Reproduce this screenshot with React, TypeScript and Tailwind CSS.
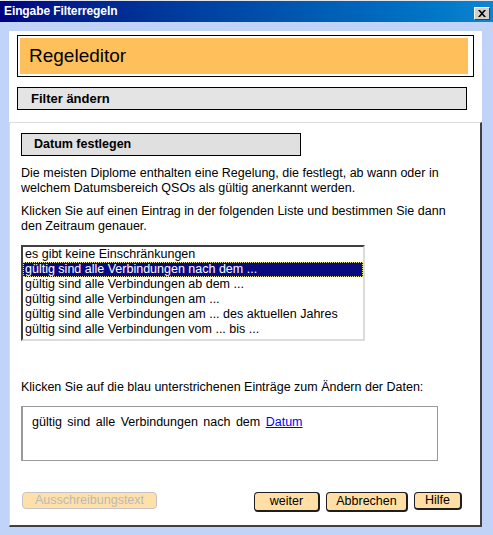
import React from "react";

const items = [
  "es gibt keine Einschränkungen",
  "gültig sind alle Verbindungen nach dem ...",
  "gültig sind alle Verbindungen ab dem ...",
  "gültig sind alle Verbindungen am ...",
  "gültig sind alle Verbindungen am ... des aktuellen Jahres",
  "gültig sind alle Verbindungen vom ... bis ...",
];

const font = { fontFamily: '"Liberation Sans", Arial, sans-serif' };

function Btn({ label, w, h, disabled }: { label: string; w: string; h: string; disabled?: boolean }) {
  if (disabled) {
    return (
      <div className={`${w} ${h} flex items-center justify-center rounded-[4px] border border-[#c4c4c4] bg-[#ffe0aa] text-[12.5px] text-[#b9b9b9]`}>
        {label}
      </div>
    );
  }
  return (
    <div className={`${w} ${h} flex items-center justify-center rounded-[4px] border border-r-2 border-b-2 border-[#1e1e1e] bg-[#ffdfa6] text-[12.5px] text-black`}>
      {label}
    </div>
  );
}

export default function App() {
  return (
    <div className="w-[493px] h-[535px] bg-[#c1d3f6] flex flex-col text-black" style={font}>
      {/* title bar */}
      <div className="h-[22px] border-t border-[#dfe4ee] bg-gradient-to-r from-[#000080] to-[#1084d0] flex items-start justify-between pl-[4px] pr-[3px]">
        <span className="text-white font-bold text-[12px] leading-[20px] tracking-[-0.1px]">Eingabe Filterregeln</span>
        <div className="mt-[6px] w-[16px] h-[13px] bg-[#d4d0c8] border border-t-white border-l-white border-r-[#404040] border-b-[#404040] flex items-center justify-center">
          <svg width="8" height="7" viewBox="0 0 8 7">
            <path d="M0 0h2l2 2.2L6 0h2L5 3.5 8 7H6L4 4.8 2 7H0l3-3.5z" fill="#000" />
          </svg>
        </div>
      </div>

      <div className="flex-1 flex flex-col pl-[9px] pr-[11px] pt-[9px] pb-[8px]">
        {/* top panel */}
        <div className="h-[91px] bg-white pt-[4px] pl-[8px]">
          <div className="w-[457px] h-[42px] border border-black pl-[2px] pt-[2px] pb-[2px] pr-[5px]">
            <div className="h-full bg-[#ffc05c] flex items-center pl-[9px] text-[19px]">Regeleditor</div>
          </div>
          <div className="mt-[10px] w-[450px] h-[23px] border border-black bg-[#e4e4e4] flex items-center pl-[13px] font-bold text-[13px]">
            Filter ändern
          </div>
        </div>

        {/* main panel */}
        <div className="flex-1 bg-white border-t border-l border-[#dcdcdc] border-r-2 border-b-2 border-r-[#404040] border-b-[#404040] pl-[11px] pt-[10px] pr-[18px] flex flex-col">
          <div className="w-[280px] h-[23px] border border-black bg-[#e0e0e0] flex items-center pl-[12px] font-bold text-[12.5px]">
            Datum festlegen
          </div>
          <p className="mt-[10px] text-[12.5px] leading-[15px]">
            Die meisten Diplome enthalten eine Regelung, die festlegt, ab wann oder in welchem Datumsbereich QSOs als gültig anerkannt werden.
          </p>
          <p className="mt-[8px] text-[12.5px] leading-[15px]">
            Klicken Sie auf einen Eintrag in der folgenden Liste und bestimmen Sie dann den Zeitraum genauer.
          </p>

          <div className="mt-[11px] w-[344px] h-[96px] border-2 border-t-[#404040] border-l-[#404040] border-r-[#dcdcdc] border-b-[#dcdcdc] flex flex-col">
            {items.map((it, i) =>
              i === 1 ? (
                <div key={it} className="h-[15px] bg-[#0a0a80] text-white border border-dotted border-[#e8e890] pl-[1px] text-[12.5px] leading-[13px] whitespace-nowrap">
                  {it}
                </div>
              ) : (
                <div key={it} className="h-[15px] pl-[2px] text-[12.5px] leading-[15px] whitespace-nowrap">
                  {it}
                </div>
              )
            )}
          </div>

          <p className="mt-[39px] text-[12.5px] leading-[15px]">
            Klicken Sie auf die blau unterstrichenen Einträge zum Ändern der Daten:
          </p>

          <div className="mt-[11px] w-[417px] h-[55px] border border-[#9a9a9a] border-l-2 pl-[9px] pt-[8px] text-[12.5px] leading-[15px] [word-spacing:2px]">
            gültig sind alle Verbindungen nach dem{" "}
            <span className="text-[#0000ff] underline">Datum</span>
          </div>

          <div className="mt-[31px] flex items-start">
            <div className="ml-[1px]">
              <Btn label="Ausschreibungstext" w="w-[135px]" h="h-[17px]" disabled />
            </div>
            <div className="ml-auto flex items-start gap-[6px]">
              <Btn label="weiter" w="w-[66px]" h="h-[20px]" />
              <Btn label="Abbrechen" w="w-[82px]" h="h-[20px]" />
              <Btn label="Hilfe" w="w-[48px]" h="h-[18px]" />
            </div>
          </div>
        </div>
      </div>
    </div>
  );
}
